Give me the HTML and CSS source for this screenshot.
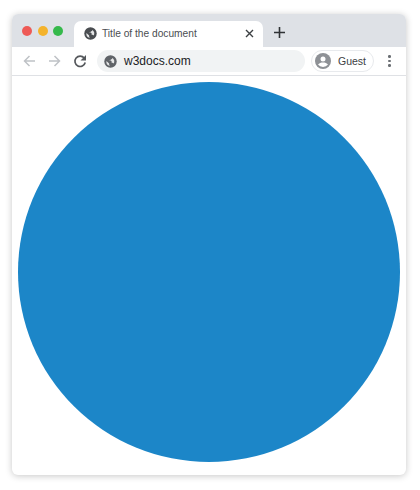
FILE: index.html
```html
<!DOCTYPE html>
<html lang="en">
<head>
    <meta charset="UTF-8">
    <title>Title of the document</title>
    <link rel="stylesheet" href="styles.css">
</head>
<body>
    <div class="window">
        <div class="tabstrip">
            <div class="lights">
                <span class="light red"></span>
                <span class="light yellow"></span>
                <span class="light green"></span>
            </div>
            <div class="tab">
                <svg class="globe" width="13" height="13" viewBox="0 0 24 24"><circle cx="12" cy="12" r="11.500" fill="#4a4d51"/><path fill="#e4e5e6" d="M4.500 11l5 4.500v2c0 .8.400 1.300 1 1.500v1A8 8 0 0 1 4.500 11zM15 5.500l2.500 2 1.500 3-.3 3.500-1.200 1.500c-.6-.8-1.200-1.200-2-1.200h-1.500v-2.600c0-.7-.5-1.200-1.200-1.200H9.500V10h2c.6 0 1-.5 1-1V8h1c.8 0 1.500-1.200 1.500-2.500z"/></svg>
                <span class="tab-title">Title of the document</span>
                <svg class="tab-close" width="9" height="9" viewBox="0 0 9 9"><path d="M1 1l7 7M8 1L1 8" stroke="#3c4043" stroke-width="1.400" fill="none"/></svg>
            </div>
            <svg class="new-tab" width="11" height="11" viewBox="0 0 11 11"><path d="M5.500 0v11M0 5.500h11" stroke="#2f3235" stroke-width="1.600" fill="none"/></svg>
        </div>
        <div class="toolbar">
            <svg class="nav" width="14" height="14" viewBox="0 0 14 14"><path d="M12 7H1.500M6.500 2L1.500 7l5 5" stroke="#bfc2c6" stroke-width="1.500" fill="none"/></svg>
            <svg class="nav" width="14" height="14" viewBox="0 0 14 14"><path d="M1 7h10.500M6.500 2l5 5-5 5" stroke="#bfc2c6" stroke-width="1.500" fill="none"/></svg>
            <svg class="nav" width="14" height="14" viewBox="0 0 14 14"><path d="M11.200 4A5.200 5.200 0 1 0 12.200 8.500" stroke="#55585c" stroke-width="1.700" fill="none"/><path d="M13 1v5.500H7.500z" fill="#55585c"/></svg>
            <div class="omnibox">
                <svg class="globe" width="13" height="13" viewBox="0 0 24 24"><circle cx="12" cy="12" r="11.500" fill="#5f6368"/><path fill="#e4e5e6" d="M4.500 11l5 4.500v2c0 .8.400 1.300 1 1.500v1A8 8 0 0 1 4.500 11zM15 5.500l2.500 2 1.500 3-.3 3.500-1.200 1.500c-.6-.8-1.200-1.200-2-1.200h-1.500v-2.600c0-.7-.5-1.200-1.200-1.200H9.500V10h2c.6 0 1-.5 1-1V8h1c.8 0 1.500-1.200 1.500-2.500z"/></svg>
                <span class="url">w3docs.com</span>
            </div>
            <div class="profile">
                <svg width="16" height="16" viewBox="0 0 16 16"><circle cx="8" cy="8" r="8" fill="#8e9196"/><circle cx="8" cy="6" r="2.500" fill="#fff"/><path d="M3 11.600c1-1.600 3-2.200 5-2.200s4 .6 5 2.200A6.300 6.300 0 0 1 8 14a6.300 6.300 0 0 1-5-2.400z" fill="#fff"/></svg>
                <span class="guest">Guest</span>
            </div>
            <div class="menu">
                <span class="dot"></span>
                <span class="dot"></span>
                <span class="dot"></span>
            </div>
        </div>
        <div class="content">
            <div class="circle"></div>
        </div>
    </div>
</body>
</html>
```

FILE: styles.css
```css
body {
    margin: 0;
    width: 420px;
    height: 490px;
    padding: 14px 14px 15px 12px;
    box-sizing: border-box;
    background: #fff;
    font-family: 'Liberation Sans', Arial, sans-serif;
    overflow: hidden;
}

.window {
    display: flex;
    flex-direction: column;
    height: 461px;
    background: #fff;
    border-radius: 6px;
    box-shadow: 0 1px 7px rgba(0,0,0,0.22);
    overflow: hidden;
}

.tabstrip {
    display: flex;
    align-items: flex-end;
    height: 33px;
    background: #dee1e6;
    flex: none;
}

.lights {
    display: flex;
    gap: 5.5px;
    width: 62px;
    padding: 0 0 11px 10px;
    box-sizing: border-box;
}

.light {
    width: 10px;
    height: 10px;
    border-radius: 50%;
}

.red { background: #ee5a56; }
.yellow { background: #f4b32c; }
.green { background: #35b94b; }

.tab {
    display: flex;
    align-items: center;
    width: 189px;
    height: 26px;
    padding: 0 9px 2px 10px;
    box-sizing: border-box;
    background: #fff;
    border-radius: 7px 7px 0 0;
}

.tab-title {
    flex: 1;
    margin-left: 5px;
    font-size: 10.2px;
    color: #4a4d51;
    white-space: nowrap;
}

.new-tab {
    margin: 0 0 9px 11px;
}

.toolbar {
    display: flex;
    align-items: center;
    height: 28px;
    border-bottom: 1px solid #dfe1e5;
    flex: none;
}

.nav {
    margin-left: 11px;
    flex: none;
}

.omnibox {
    display: flex;
    align-items: center;
    width: 208px;
    height: 22px;
    margin-left: 10px;
    padding-left: 7px;
    box-sizing: border-box;
    background: #f1f3f4;
    border-radius: 11px;
}

.url {
    margin-left: 7px;
    font-size: 12px;
    color: #202124;
}

.profile {
    display: flex;
    align-items: center;
    width: 63px;
    height: 22px;
    margin-left: 6px;
    padding-left: 3px;
    box-sizing: border-box;
    border: 1px solid #e8eaed;
    border-radius: 11px;
}

.guest {
    margin-left: 7px;
    font-size: 10.5px;
    color: #3c4043;
}

.menu {
    display: flex;
    flex-direction: column;
    gap: 2px;
    margin-left: 14px;
}

.dot {
    width: 2.5px;
    height: 2.5px;
    border-radius: 50%;
    background: #6b6f74;
}

.content {
    flex: 1;
    padding: 6px 6px 0;
}

.circle {
    width: 382px;
    height: 380px;
    border-radius: 50%;
    background: #1c86c8;
}
```
